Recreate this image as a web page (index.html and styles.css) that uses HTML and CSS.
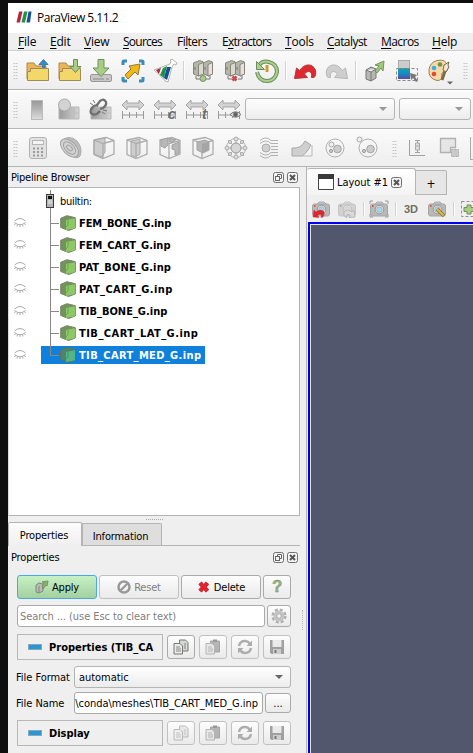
FILE: index.html
```html
<!DOCTYPE html>
<html lang="en">
<head>
<meta charset="utf-8">
<title>ParaView 5.11.2</title>
<link rel="stylesheet" href="styles.css">
</head>
<body>
<svg class="defs" width="0" height="0">
  <defs>
    <linearGradient id="gray" x1="0" y1="0" x2="0" y2="1"><stop offset="0" stop-color="#989898"/><stop offset=".45" stop-color="#b4b4b4"/><stop offset="1" stop-color="#ddd"/></linearGradient>
    <linearGradient id="grayH" x1="0" y1="0" x2="1" y2="0"><stop offset="0" stop-color="#999"/><stop offset="1" stop-color="#d5d5d5"/></linearGradient>
    <linearGradient id="rainbow" x1="0" y1="0" x2="0" y2="1"><stop offset="0" stop-color="#16a5a0"/><stop offset=".5" stop-color="#168bc9"/><stop offset="1" stop-color="#5b4a9a"/></linearGradient>
    <symbol id="folder" viewBox="0 0 24 24"><path d="M2 20V4h7l2 3h10v13z" fill="#eeb457" stroke="#a98a50"/><path d="M5.500 9.500h18v12H2.500v-9h3z" fill="#f3d768" stroke="#a08c58"/></symbol>
    <symbol id="server" viewBox="0 0 24 24"><path d="M2.500 4l6-2.500 4 1.500v12l-5 2-5-2z" fill="#b5b6aa" stroke="#85857a"/><path d="M7.500 5.500l5-2V15l-5 2z" fill="#dadad0" stroke="#85857a"/><path d="M12.500 4l5-2.500 4 1.500v12l-4 2-5-2z" fill="#b5b6aa" stroke="#85857a"/><path d="M17 5.500l4.500-2V15L17 17z" fill="#eadfe0" stroke="#85857a"/><path d="M5 17v3h4m6 0h4v-3M4 8v3m10-3v3" fill="none" stroke="#777"/></symbol>
    <symbol id="cube" viewBox="0 0 16 16"><path d="M.7 3.300L7 .7l8.300 2V13L8.500 15.500.7 12.500z" fill="#71945b" stroke="#7b806c"/><path d="M6 5L15 3.300v9.900L6 15z" fill="#8cc866"/><path d="M8 4.800v5.200l-2 2" fill="none" stroke="#6ea44f"/></symbol>
    <symbol id="eye" viewBox="0 0 12 12"><path d="M.5 4Q6-1 11.500 4M.5 5.500Q6 10 11.500 5.500M1.500 6.500L.5 8m3-.5L3 9.500m3-1.500v2m2.500-2.500l.5 2m1.500-3l1 1.500" fill="none" stroke="#aaa"/></symbol>
    <symbol id="range" viewBox="0 0 24 24"><path d="M1 7l5-5v3h12V2l5 5-5 5V9H6v3z" fill="#d2d2d2" stroke="#a6a6a6"/><path d="M1.500 13v8m21-8v8M2 17h20M8.500 14v6m7-6v6" fill="none" stroke="#999"/></symbol>
    <symbol id="wire" viewBox="0 0 24 24"><path d="M2 4l12-2.500 8 3V18L11 22.500l-9-4zM2 4l9 3.500v15M11 7.500l11-3" fill="none" stroke="#acacac" stroke-width="1.300"/></symbol>
    <symbol id="camera" viewBox="0 0 20 18"><rect x="1.500" y="4" width="17" height="12" rx="2" fill="#b9b9b7" stroke="#a5a5a3"/><path d="M6 4l2-2h5l2 2z" fill="#ccc" stroke="#aaa"/><circle cx="10.500" cy="9.500" r="4.300" fill="#e1e1df" stroke="#999"/><circle cx="10.500" cy="9.500" r="2.700" fill="#aad7f0" stroke="#90a8b5" stroke-width=".7"/><path d="M3 6h1.500" stroke="#e33" stroke-width="1.500"/></symbol>
    <symbol id="undo" viewBox="0 0 24 24"><path d="M1.500 19.500L3.500 9l3 2.500Q12 4 18.500 6.500q6 3.500 3.500 11-1 1.500-3.500 1 1-6-3-6-2.500 0-4 2.500l3 3.500z"/></symbol>
    <symbol id="restore" viewBox="0 0 11 11"><rect x=".5" y=".5" width="10" height="10" rx="2" fill="#f4f4f4" stroke="#6e6e6e"/><path d="M4.500 4.500v-2h4v4h-2" fill="none" stroke="#666"/><rect x="2.500" y="4.500" width="4" height="4" fill="none" stroke="#666"/></symbol>
    <symbol id="close" viewBox="0 0 11 11"><rect x=".5" y=".5" width="10" height="10" rx="2" fill="#f4f4f4" stroke="#6e6e6e"/><path d="M3 3l5 5m0-5L3 8" stroke="#555" stroke-width="2"/></symbol>
    <symbol id="copy" viewBox="0 0 16 16"><path d="M6.500 1h6l2.500 2.500V12H6.500z" fill="#d4d7d2" stroke="#777"/><path d="M1 4.500h6L9.500 7v8H1z" fill="#e9ebe5" stroke="#777"/><path d="M3 8h4M3 10h5M3 12h5M11 5h2m-2 2h2m-2 2h2" stroke="#888"/></symbol>
    <symbol id="paste" viewBox="0 0 16 16"><path d="M5.500 2h9v11h-9z" fill="#aaa" stroke="#999"/><path d="M8 .5h4V3H8z" fill="#888"/><path d="M1 4.500h6L9.500 7v8H1z" fill="#e6e6e6" stroke="#aaa"/><path d="M3 8h4M3 10h5M3 12h5" stroke="#aaa"/></symbol>
    <symbol id="reload" viewBox="0 0 16 16"><path d="M2 7Q3 2 8 2q3 0 5 3M14 9q-1 5-6 5-3 0-5-3" fill="none" stroke="#a1a1a1" stroke-width="2.400"/><path d="M15 1.500v5.500H9.500zM1 14.500V9h5.500z" fill="#a1a1a1"/></symbol>
    <symbol id="save" viewBox="0 0 16 16"><path d="M1 1h14v14H2.500L1 13.500z" fill="#929292"/><path d="M3.500 1h9v7h-9z" fill="#e9e9e9"/><path d="M4 10h8v5H4z" fill="#c9c9c9"/><path d="M5.500 11h2v3h-2z" fill="#666"/></symbol>
  </defs>
</svg>
<div class="window">
  <header class="titlebar">
    <svg class="logo" viewBox="0 0 16 12"><path d="M3 .5h3.500l-2.500 11H.5z" fill="#b5273a"/><path d="M8 .5h3.500L9 11.500H5.500z" fill="#219149"/><path d="M12.500.5H15.500L14 11.500h-3.500z" fill="#154f94"/></svg>
    <span>ParaView 5.11.2</span>
  </header>
  <nav class="menubar">
    <span class="m-file"><u>F</u>ile</span><span class="m-edit"><u>E</u>dit</span><span class="m-view"><u>V</u>iew</span><span class="m-sources"><u>S</u>ources</span><span class="m-filters">Fi<u>l</u>ters</span><span class="m-extractors">E<u>x</u>tractors</span><span class="m-tools"><u>T</u>ools</span><span class="m-catalyst"><u>C</u>atalyst</span><span class="m-macros"><u>M</u>acros</span><span class="m-help"><u>H</u>elp</span>
  </nav>
  <div class="toolbar">
    <i class="grip"></i>
    <svg viewBox="0 0 24 24"><use href="#folder"/><path d="M17.500 8.500V5.500H14L18.500.5 23 5.500h-3v3z" fill="#2990cc" stroke="#4b7898"/></svg>
    <svg viewBox="0 0 24 24"><use href="#folder"/><path d="M16.500.5h4v7H24l-5.500 6L13 7.500h3.500z" fill="#a7cc84" stroke="#748b61"/></svg>
    <svg viewBox="0 0 24 24"><rect x="1.500" y="15.500" width="21" height="7" rx="1.500" fill="#c8c8c6" stroke="#999"/><path d="M4 20h11m2 0h3" stroke="#888"/><path d="M9 .5h6v8.500h5l-8 8.500L4 9h5z" fill="#a7cc84" stroke="#748b61"/></svg>
    <svg viewBox="0 0 24 24"><path d="M2 6V3q0-1 1-1h3M18 2h3q1 0 1 1v3M2 18v3q0 1 1 1h3m12 0h3q1 0 1-1v-3" fill="none" stroke="#3e8bb8" stroke-width="3"/><path d="M8 7l11-2-2 11-3-3-7 7-3-4 6-6z" fill="#f2b818" stroke="#8c7c43"/></svg>
    <svg viewBox="0 0 24 24"><path d="M1 11L17 5l1-3-1-1 2-1 5 4-1 2-2-1-2 3-4 15-3-1-2-3H9l-3-4-4-3z" fill="#fff" stroke="#b4b4ac"/><path d="M3 11l5-2-2 6z" fill="#b7293b"/><path d="M10 9l4-2-3 12-4-3z" fill="#219149"/><path d="M14 8h4l-4 13-3-2z" fill="#154f94"/></svg>
    <i class="sep"></i>
    <svg viewBox="0 0 24 24"><use href="#server"/><circle cx="12" cy="19.500" r="3" fill="#a7cc84" stroke="#7b8b6c"/></svg>
    <svg viewBox="0 0 24 24"><use href="#server"/><path d="M9.500 17.500l4 4m0-4l-4 4" stroke="#ce4848" stroke-width="2.500"/></svg>
    <svg viewBox="0 0 24 24"><path d="M4 6q4-5 10-3 8 2 8 10-2 9-10 9-8 0-10-9" fill="none" stroke="#6d8961" stroke-width="4"/><path d="M4 6q4-5 10-3 8 2 8 10-2 9-10 9-8 0-10-9" fill="none" stroke="#a8d284" stroke-width="2"/><path d="M1.500 2.500v8h8z" fill="#a8d284" stroke="#6d8961"/><path d="M12 6v7" stroke="#cc9d32" stroke-width="3"/></svg>
    <i class="sep"></i>
    <svg viewBox="0 0 24 24"><use href="#undo" fill="#e2272f" stroke="#ab3b42"/></svg>
    <svg viewBox="0 0 24 24"><use href="#undo" fill="#cecece" stroke="#b6b6b6" transform="matrix(-1 0 0 1 24 0)"/></svg>
    <i class="sep"></i>
    <svg viewBox="0 0 24 24"><path d="M3 11l5-3 5 2v9l-5 3-5-2zM8 13v9M3 11l5 2 5-3" fill="#b7b8b2" stroke="#777"/><path d="M12 12l4-5-4-1 9-4-1 10-2-3-4 5z" fill="#9bcc75" stroke="#759060"/></svg>
    <svg viewBox="0 0 24 24"><rect x="3.500" y="1.500" width="11" height="8" fill="#ccc" stroke="#aaa"/><rect x="3" y="9" width="12" height="11" fill="url(#rainbow)"/><path d="M1.500 9.500h21v12h-21z" fill="none" stroke="#888" stroke-dasharray="3 2"/><path d="M15 14l7 2-2 2 3 4-2 1-3-4-2 2z" fill="#777"/></svg>
    <svg viewBox="0 0 24 24"><path d="M10 1.500q9-2 11 6 0 6-5 6-2 0-1 4 0 4-5 4-9-2-8-11 1-7 8-9z" fill="#f6d9a8" stroke="#9c8355"/><circle cx="7" cy="9" r="2.300" fill="#42afd9"/><circle cx="13" cy="5.500" r="2.300" fill="#6b9645"/><circle cx="7" cy="15" r="2.300" fill="#e14a35"/><path d="M18 12l-3 9" stroke="#7d6b45" stroke-width="3"/><path d="M17 6l5-3-1 3 1 2-3 5-3-2z" fill="#eee7d2" stroke="#756b4d"/><path d="M20 22.500h6l-3 3z" fill="#666"/></svg>
    <i class="grip last"></i>
  </div>
  <div class="toolbar color-bar">
    <i class="grip"></i>
    <svg viewBox="0 0 24 24"><rect x="6.500" y="2.500" width="11" height="19" fill="url(#gray)" stroke="#bababa"/></svg>
    <svg viewBox="0 0 24 24"><path d="M2 9h20v12H2z" fill="url(#grayH)" stroke="#b7b7b7"/><path d="M12 15h10m-5-6v12" stroke="#bbb"/><circle cx="7.500" cy="7" r="6" fill="#d3d3d3" stroke="#aaa"/></svg>
    <svg viewBox="0 0 24 24"><path d="M2 9h20v12H2z" fill="url(#grayH)" stroke="#b7b7b7"/><path d="M12 15h10m-5-6v12" stroke="#bbb"/><g fill="none" stroke="#707070" stroke-width="2.300"><path d="M8 7l3-4q4-3 6 1 1 3-3 6l-3 1M9 8Q6 6 3 10q-3 4 0 6 4 2 8-3"/></g><path d="M4 2l2 3M1 5l3 2m9 7l3 2m-2-4l4 1" stroke="#777"/></svg>
    <svg viewBox="0 0 24 24"><use href="#range"/></svg>
    <svg viewBox="0 0 24 24"><use href="#range"/><text class="icon-letter" x="15" y="21">c</text></svg>
    <svg viewBox="0 0 24 24"><use href="#range"/><text class="icon-letter" x="17" y="21">t</text></svg>
    <svg viewBox="0 0 24 24"><use href="#range"/><path d="M13 16.500q5.500-5.500 11 0-5.500 5.500-11 0z" fill="#ddd" stroke="#777"/><circle cx="18.500" cy="16.500" r="2.400" fill="#666"/></svg>
    <div class="combo array"><i class="arrow"></i></div>
    <div class="combo component"><i class="arrow"></i></div>
  </div>
  <div class="toolbar filters">
    <i class="grip"></i>
    <svg viewBox="0 0 24 24"><rect x="3.500" y="1.500" width="17" height="21" rx="2.500" fill="#e2e2e2" stroke="#b2b2b2"/><rect x="6.500" y="4.500" width="11" height="4" fill="#f4f4f4" stroke="#b5b5b5"/><path d="M7 12.500h2m2 0h2m2 0h2M7 16h2m2 0h2m2 0h2M7 19.500h2m2 0h2m2 0h2" stroke="#999" stroke-width="2"/></svg>
    <svg viewBox="0 0 24 24"><path d="M2 5Q10-2 18 5q6 7 3 15-3 4-10-1Q2 13 2 5z" fill="#bdbdbd" stroke="#aaa"/><g fill="#d2d2d2" stroke="#a4a4a4"><ellipse cx="10.500" cy="12" rx="11" ry="6.500" transform="rotate(45 10.500 12)"/><ellipse cx="10.500" cy="12" rx="7.500" ry="4.300" transform="rotate(45 10.500 12)"/><ellipse cx="10.500" cy="12" rx="3.500" ry="2" transform="rotate(45 10.500 12)"/></g></svg>
    <svg viewBox="0 0 24 24"><path d="M2 4l11-2v14l-3 5-8-3z" fill="#cdcdcd" stroke="#a8a8a8"/><use href="#wire"/></svg>
    <svg viewBox="0 0 24 24"><path d="M6 5l9-2v15l-5 3-4-2z" fill="#cdcdcd" stroke="#a8a8a8"/><use href="#wire"/></svg>
    <svg viewBox="0 0 24 24"><use href="#wire"/><path d="M3 4l7-2v7l-3 3-4-2zm11 5l7-3v11l-4 2v-5l-3-1zM11 2.500l7 1-4 3-3-1z" fill="#b8b8b8" stroke="#a0a0a0"/></svg>
    <svg viewBox="0 0 24 24"><use href="#wire"/><path d="M6 6l8-2 4 2v8l-6 3-6-3z" fill="#b4b4b4" stroke="#a5a5a5"/><path d="M11 8l7-2v8l-7 3z" fill="#a5a5a5"/></svg>
    <svg viewBox="0 0 24 24"><g fill="none" stroke="#b0b0b0"><circle cx="12" cy="12" r="9.500"/><path d="M12 1v22M1 12h22M4 4l16 16M20 4L4 20"/></g><circle cx="12" cy="12" r="5" fill="#d7d7d7" stroke="#999"/><g fill="#e0e0e0" stroke="#aaa"><circle cx="12" cy="3" r="2"/><circle cx="12" cy="21" r="2"/><circle cx="3" cy="12" r="2"/><circle cx="21" cy="12" r="2"/><circle cx="6" cy="6" r="1.500"/><circle cx="18" cy="18" r="1.500"/><circle cx="18" cy="6" r="1.500"/><circle cx="6" cy="18" r="1.500"/></g></svg>
    <svg viewBox="0 0 24 24"><circle cx="9" cy="12" r="4" fill="#d0d0d0" stroke="#aaa"/><path d="M3 7.500q6-5 11 0h7M3 4.500q6-5 11 0h7M3 16.500q6 5 11 0h7M3 19.500q6 5 11 0h7M14 10.500h7m-7 3h7" fill="none" stroke="#b0b0b0"/></svg>
    <svg viewBox="0 0 24 24"><path d="M2 12q9 1 13-7l6 4q-5 9-9 11H2z" fill="#cfcfcf" stroke="#a8a8a8"/><path d="M12 20h10V9" fill="none" stroke="#bbb"/></svg>
    <svg viewBox="0 0 24 24"><circle cx="12" cy="12" r="9" fill="none" stroke="#b0b0b0"/><circle cx="8.500" cy="8.500" r="2.500" fill="#eee" stroke="#aaa"/><circle cx="14.500" cy="13" r="3.800" fill="#ccc" stroke="#a4a4a4"/><circle cx="8" cy="15" r="1.600" fill="#ccc" stroke="#999"/></svg>
    <svg viewBox="0 0 24 24"><circle cx="12" cy="12" r="9" fill="none" stroke="#b0b0b0"/><circle cx="3.500" cy="3.500" r="2.500" fill="#eee" stroke="#aaa"/><circle cx="14.500" cy="13" r="3.800" fill="#ccc" stroke="#a4a4a4"/><circle cx="8" cy="15" r="1.600" fill="#ccc" stroke="#999"/></svg>
    <i class="grip middle"></i>
    <svg viewBox="0 0 24 24"><path d="M4.500 4v15.500H20M12.500 4v13M10 4.500h5M10 16.500h5" fill="none" stroke="#a0a0a0"/><path d="M10.500 7h4v7h-4zM10.500 10h4" fill="#ddd" stroke="#aaa"/></svg>
    <svg viewBox="0 0 24 24"><path d="M2.500 2.500h15v9h-5v5h-10z" fill="#e6e6e6" stroke="#b0b0b0" stroke-width="1.300"/><path d="M13.500 13.500h7v7h-7z" fill="#c9c9c9" stroke="#aaa" stroke-dasharray="2 1"/></svg>
    <i class="plot-edge"></i>
  </div>
  <main class="workspace">
    <aside class="docks">
      <div class="dock-title"><span class="t-pipeline">Pipeline Browser</span><span class="dock-buttons"><svg viewBox="0 0 11 11"><use href="#restore"/></svg><svg viewBox="0 0 11 11"><use href="#close"/></svg></span></div>
      <div class="tree">
        <div class="server-row"><svg class="server-icon" viewBox="0 0 8 14"><rect x=".5" y=".5" width="7" height="13" fill="#b5b5b5" stroke="#3c3c3c"/><path d="M2 2h4v3H2z" fill="#111"/><path d="M2 7h4m-4 2h4" stroke="#eee"/></svg><span>builtin:</span></div>
        <div class="node"><svg class="eye" viewBox="0 0 12 12"><use href="#eye"/></svg><div class="label"><svg viewBox="0 0 16 16"><use href="#cube"/></svg><b class="tight">FEM_BONE_G.inp</b></div></div>
        <div class="node"><svg class="eye" viewBox="0 0 12 12"><use href="#eye"/></svg><div class="label"><svg viewBox="0 0 16 16"><use href="#cube"/></svg><b>FEM_CART_G.inp</b></div></div>
        <div class="node"><svg class="eye" viewBox="0 0 12 12"><use href="#eye"/></svg><div class="label"><svg viewBox="0 0 16 16"><use href="#cube"/></svg><b class="loose">PAT_BONE_G.inp</b></div></div>
        <div class="node"><svg class="eye" viewBox="0 0 12 12"><use href="#eye"/></svg><div class="label"><svg viewBox="0 0 16 16"><use href="#cube"/></svg><b>PAT_CART_G.inp</b></div></div>
        <div class="node"><svg class="eye" viewBox="0 0 12 12"><use href="#eye"/></svg><div class="label"><svg viewBox="0 0 16 16"><use href="#cube"/></svg><b>TIB_BONE_G.inp</b></div></div>
        <div class="node"><svg class="eye" viewBox="0 0 12 12"><use href="#eye"/></svg><div class="label"><svg viewBox="0 0 16 16"><use href="#cube"/></svg><b>TIB_CART_LAT_G.inp</b></div></div>
        <div class="node selected"><svg class="eye" viewBox="0 0 12 12"><use href="#eye"/></svg><div class="label"><svg viewBox="0 0 16 16"><use href="#cube"/></svg><b>TIB_CART_MED_G.inp</b></div></div>
      </div>
      <div class="splitter"><i></i></div>
      <div class="tabs"><div class="tab active">Properties</div><div class="tab">Information</div></div>
      <div class="dock-title properties-title"><span>Properties</span><span class="dock-buttons"><svg viewBox="0 0 11 11"><use href="#restore"/></svg><svg viewBox="0 0 11 11"><use href="#close"/></svg></span></div>
      <section class="panel">
        <div class="actions">
          <button class="btn apply"><svg viewBox="0 0 14 14"><path d="M1 5l3-2 4 1v7l-4 2-3-1zM4 6v7" fill="#bbb" stroke="#7d8b77"/><path d="M7 6l2-3-2-1 6-1-1 5-1-1-3 4z" fill="#83b56c" stroke="#789367"/></svg>Apply</button>
          <button class="btn disabled"><svg viewBox="0 0 14 14"><circle cx="7" cy="7" r="5.500" fill="none" stroke="#999" stroke-width="2.500"/><path d="M3 11l8-8" stroke="#999" stroke-width="2.300"/></svg>Reset</button>
          <button class="btn"><svg viewBox="0 0 14 14"><path d="M3 3l7.500 8M10.500 3L3 11" stroke="#b03540" stroke-width="4.400"/><path d="M3 3l7.500 8M10.500 3L3 11" stroke="#e8222c" stroke-width="3.200"/></svg>Delete</button>
          <button class="btn help">?</button>
        </div>
        <div class="search-row"><div class="field search">Search ... (use Esc to clear text)</div><button class="btn"><svg viewBox="0 0 16 16"><circle cx="8" cy="8" r="6.300" fill="none" stroke="#b0b0b0" stroke-width="2.500" stroke-dasharray="3 1.950"/><circle cx="8" cy="8" r="4" fill="#e0e0e0" stroke="#c4c4c4" stroke-width="3"/><circle cx="8" cy="8" r="2.300" fill="#f5f5f5" stroke="#aaa"/></svg></button></div>
        <div class="group"><div class="group-title"><i></i><b>Properties (TIB_CA</b></div><button class="btn"><svg viewBox="0 0 16 16"><use href="#copy"/></svg></button><button class="btn disabled"><svg viewBox="0 0 16 16"><use href="#paste"/></svg></button><button class="btn disabled"><svg viewBox="0 0 16 16"><use href="#reload"/></svg></button><button class="btn disabled"><svg viewBox="0 0 16 16"><use href="#save"/></svg></button></div>
        <div class="form-row format"><label>File Format</label><div class="combo">automatic<i class="arrow"></i></div></div>
        <div class="form-row name"><label>File Name</label><div class="field">\conda\meshes\TIB_CART_MED_G.inp</div><button class="btn">...</button></div>
        <div class="group display"><div class="group-title"><i></i><b>Display</b></div><button class="btn disabled"><svg class="dim" viewBox="0 0 16 16"><use href="#copy"/></svg></button><button class="btn disabled"><svg viewBox="0 0 16 16"><use href="#paste"/></svg></button><button class="btn disabled"><svg viewBox="0 0 16 16"><use href="#reload"/></svg></button><button class="btn disabled"><svg viewBox="0 0 16 16"><use href="#save"/></svg></button></div>
      </section>
    </aside>
    <div class="vertical-splitter"><i></i></div>
    <section class="views">
      <div class="layout-tabs"><div class="layout-tab"><svg viewBox="0 0 16 16"><path d="M.5.5h15v15H.5z" fill="#fff" stroke="#444"/><path d="M0 0h16v5H0z" fill="#3a3a3a"/></svg><span>Layout #1</span><svg class="x" viewBox="0 0 11 11"><use href="#close"/></svg></div><div class="add-tab">+</div></div>
      <div class="view-toolbar">
        <svg viewBox="0 0 20 18"><use href="#camera"/><path d="M2 17l1-7 2 2q5-4 8 0 1 2-1 5l-2 .5q1-4-2-3l-1.500 1 1.500 2z" fill="#e1252d" stroke="#b93a40" stroke-width=".5"/></svg>
        <svg class="faded" viewBox="0 0 20 18"><use href="#camera"/><path d="M18 17l-1-7-2 2q-5-4-8 0-1 2 1 5l2 .5q-1-4 2-3l1.500 1-1.500 2z" fill="#ccc" stroke="#888"/></svg>
        <i class="sep"></i>
        <svg viewBox="0 0 20 18"><use href="#camera"/><path d="M1 4V1h3m12 0h3v3M1 14v3h3m12 0h3v-3" fill="none" stroke="#999"/></svg>
        <i class="sep"></i>
        <b>3D</b>
        <svg class="zoom" viewBox="0 0 20 18"><use href="#camera"/><path d="M10 9l7 7" stroke="#8c732f" stroke-width="3.600"/><path d="M10 9l6.500 6.500" stroke="#e4bb47" stroke-width="2"/></svg>
        <i class="sep"></i>
        <svg viewBox="0 0 20 18"><path d="M2.500 1.500h16v15h-16z" fill="none" stroke="#909090" stroke-dasharray="3 2"/><path d="M8 5h4v2.500h3v4h-3V14H8v-2.500H5v-4h3z" fill="#a7cc84" stroke="#748b61"/></svg>
      </div>
      <div class="viewport"></div>
    </section>
  </main>
</div>
</body>
</html>
```

FILE: styles.css
```css
* { box-sizing: border-box; }
body {
  margin: 0;
  width: 473px;
  height: 753px;
  overflow: hidden;
  padding: 3px 0 0 8px;
  background: #0e0e0e;
  color: #000;
  font-family: "DejaVu Sans Condensed", "DejaVu Sans", sans-serif;
  font-stretch: condensed;
  font-size: 11px;
  letter-spacing: -.05px;
}
.defs { position: absolute; }
svg { display: block; flex: none; overflow: visible; }
.window { width: 465px; height: 750px; background: #efefef; display: flex; flex-direction: column; overflow: hidden; }
.titlebar { height: 30px; flex: none; background: #fff; display: flex; align-items: center; gap: 5px; padding: 0 0 2px 8px; font: 12px "Open Sans", sans-serif; letter-spacing: -.5px; }
.logo { width: 16px; height: 12px; }
.menubar { height: 18px; flex: none; border-bottom: 1px solid #cdcdcd; display: flex; padding-left: 10px; font: 12px/17px "Open Sans", sans-serif; white-space: nowrap; }
.menubar span { flex: none; letter-spacing: -.55px; }
.menubar u { text-underline-offset: 2px; text-decoration-thickness: 1px; }
.menubar .m-file, .menubar .m-edit, .menubar .m-view, .menubar .m-help, .menubar .m-tools { letter-spacing: -.2px; }
.menubar .m-sources, .menubar .m-extractors { letter-spacing: -.75px; }
.m-file { width: 32px; }
.m-edit { width: 34px; }
.m-view { width: 39px; }
.m-sources { width: 54px; }
.m-filters { width: 45px; }
.m-extractors { width: 63px; }
.m-tools { width: 42px; }
.m-catalyst { width: 54px; }
.m-macros { width: 51px; }

.toolbar { height: 39px; flex: none; display: flex; align-items: center; border-bottom: 1px solid #b5b5b5; border-top: 1px solid #fff; background: linear-gradient(#fafafa, #eee); padding-left: 5px; }
.toolbar > svg { width: 24px; height: 24px; margin: 0 4px; }
.filters { height: 38px; }
.filters > svg { margin: 0 4.500px; }
.grip { flex: none; width: 5px; height: 17px; margin-right: 3px; background-image: radial-gradient(circle, #bbb 0 .7px, transparent .9px); background-size: 2.500px 3px; }
.grip.last { margin: 0 0 0 8px; }
.grip.middle { margin: 0 3px 0 8px; }
.sep { flex: none; width: 2px; height: 19px; margin: 0 2px; border-left: 1px solid #d1d1d1; border-right: 1px solid #fff; }
.icon-letter { font: italic bold 14px "Liberation Sans", sans-serif; fill: #6c6c6c; }
.plot-edge { width: 6px; height: 23px; margin-left: 4px; border: solid #aaa; border-width: 0 0 1px 1px; flex: none; }
.combo { height: 22px; border: 1px solid #b4b4b4; border-radius: 3px; background: linear-gradient(#fefefe, #ececec); display: flex; align-items: center; justify-content: space-between; padding: 0 7px 0 4px; }
.combo.array { width: 150px; flex: none; justify-content: flex-end; }
.combo.component { width: 72px; flex: none; margin-left: 4px; justify-content: flex-end; }
.arrow { border: 4px solid transparent; border-top-color: #666; border-bottom: 0; }
.color-bar .arrow { border-top-color: #999; }
.color-bar .combo { margin-top: -1px; }

.workspace { flex: 1; display: flex; min-height: 0; }
.docks { width: 292px; flex: none; display: flex; flex-direction: column; }
.dock-title { height: 20px; flex: none; display: flex; align-items: center; justify-content: space-between; padding: 0 2px 0 3px; }
.t-pipeline { letter-spacing: -.23px; }
.dock-buttons { display: flex; gap: 3px; }
.dock-buttons svg { width: 11px; height: 11px; }
.tree { height: 329px; flex: none; background: #fff; border: 1px solid #b4b4b4; border-left-color: #ddd; padding-top: 2px; }
.server-row, .node { height: 22px; display: flex; align-items: center; }
.server-row { padding-left: 37px; gap: 6px; letter-spacing: -.3px; background: linear-gradient(#888, #888) 41px 0 / 1px 22px no-repeat; }
.server-icon { width: 8px; height: 14px; }
.eye { width: 12px; height: 12px; margin: 0 15px 0 5px; }
.node .label { position: relative; height: 18px; padding: 0 4px 0 19px; display: flex; align-items: center; gap: 3px; }
.label svg { width: 16px; height: 16px; }
.label b { letter-spacing: 0; }
.label b.tight { letter-spacing: -.1px; }
.label b.loose { letter-spacing: .14px; }
.node:nth-child(5) b { letter-spacing: .42px; }
.node:nth-child(7) b { letter-spacing: .47px; }
.node:nth-child(8) b { letter-spacing: .36px; }
.label::before { content: ""; position: absolute; left: 9px; top: -2px; width: 8px; height: 11px; border: solid #888; border-width: 0 0 1px 1px; }
.label::after { content: ""; position: absolute; left: 9px; top: 9px; width: 1px; height: 11px; background: #888; }
.selected .label { background: #0f80dc; color: #fff; }
.selected .label::after { display: none; }
.selected .label svg { filter: hue-rotate(45deg) brightness(.87); }
.splitter { height: 6px; flex: none; display: flex; justify-content: center; align-items: center; }
.splitter i { width: 17px; border-top: 1px dotted #aaa; }
.tabs { height: 24px; flex: none; display: flex; align-items: flex-end; border-bottom: 1px solid #b4b4b4; }
.tab { width: 80px; height: 22px; border: 1px solid #b4b4b4; border-bottom: 0; border-radius: 0 2px 0 0; background: #dedede; display: flex; align-items: center; justify-content: center; padding: 3px 3px 0 0; letter-spacing: -.15px; }
.tab.active { width: 74px; height: 24px; margin-bottom: -1px; background: linear-gradient(#fcfcfc, #efefef); padding: 2px 2px 0 0; border-radius: 2px 2px 0 0; }
.properties-title { height: 22px; letter-spacing: -.15px; }
.panel { padding: 7px 9px 0; }
.btn { height: 24px; min-width: 0; padding: 0; margin: 0; border: 1px solid #aaa; border-radius: 3px; background: linear-gradient(#fdfdfd, #eaeaea); color: #000; font: inherit; letter-spacing: inherit; display: flex; align-items: center; justify-content: center; gap: 3px; }
.btn.disabled { border-color: #c1c1c1; color: #808080; }
.btn svg { width: 16px; height: 16px; }
.actions { display: grid; grid-template-columns: 80px 80px 80px 28px; gap: 2px; letter-spacing: -.2px; }
.actions .btn svg { width: 14px; height: 14px; }
.btn.apply { background: linear-gradient(#c6f1c4, #a3d0a0); border-color: #49a9e8; }
.btn.help { font: bold 17px "Liberation Sans", sans-serif; color: #94b881; -webkit-text-stroke: .4px #728366; }
.search-row { display: grid; grid-template-columns: 248px 24px; gap: 2px; margin-top: 6px; }
.search-row .btn { height: 22px; }
.field { height: 22px; border: 1px solid #aaa; border-radius: 3px; background: #fff; display: flex; align-items: center; padding: 0 2px; white-space: nowrap; overflow: hidden; }
.field.search { color: #808080; letter-spacing: -.06px; }
.group { display: grid; grid-template-columns: 146px repeat(4, 28px); column-gap: 4px; align-items: center; margin-top: 7px; }
.group-title { height: 26px; border: 1px solid #b7b7b7; display: flex; align-items: center; gap: 7px; padding: 1px 5px 0 10px; }
.group-title i { width: 14px; height: 6px; flex: none; background: #2997d2; border: 1px solid #87a8bc; margin-top: -2px; }
.group-title b { white-space: nowrap; letter-spacing: 0; }
.group.display { margin-top: 6px; }
.group .disabled svg { opacity: .85; }
.group .disabled svg.dim { filter: grayscale(1); opacity: .45; }
.form-row { display: grid; grid-template-columns: 57px 217px; align-items: center; margin-top: 6px; }
.form-row label { white-space: nowrap; margin-left: -1px; }
.form-row.name { grid-template-columns: 57px 189px 26px; column-gap: 0; margin-top: 4px; }
.name .field { justify-content: flex-end; padding-right: 4px; letter-spacing: -.02px; }
.name .btn { height: 20px; margin-left: 2px; width: 26px; }
.vertical-splitter { width: 6px; flex: none; padding-top: 443px; }
.vertical-splitter i { display: block; width: 3px; height: 20px; margin-left: 2px; border-left: 1px dotted #bbb; }
.views { flex: 1; min-width: 0; display: flex; flex-direction: column; border-left: 1px solid #b4b4b4; }
.layout-tabs { height: 28px; flex: none; display: flex; align-items: flex-end; }
.layout-tab { width: 109px; height: 27px; border: 1px solid #b4b4b4; border-bottom: 0; border-left: 0; border-radius: 3px 3px 0 0; background: linear-gradient(#fff, #f3f3f3); display: flex; align-items: center; padding-left: 11px; }
.layout-tab svg { width: 16px; height: 16px; }
.layout-tab span { width: 54px; margin-left: 3px; white-space: nowrap; }
.layout-tab svg.x { width: 11px; height: 11px; }
.add-tab { width: 31px; height: 25px; border: 1px solid #b4b4b4; border-left: 0; background: #e6e6e6; display: flex; align-items: center; justify-content: center; font-size: 12px; border-radius: 0 2px 0 0; padding-top: 2px; }
.view-toolbar { height: 27px; flex: none; display: flex; align-items: center; padding-left: 4px; }
.view-toolbar > svg { width: 20px; height: 18px; margin-right: 6px; }
.view-toolbar b { width: 18px; margin: 0 9px 0 3px; font: bold 11px "Liberation Sans", sans-serif; color: #707064; }
.view-toolbar .sep { height: 14px; margin: 0 4px 0 0; }
.faded { opacity: .55; filter: grayscale(1); }
.viewport { flex: 1; margin-left: 1px; border: solid #0000f0; border-width: 2px 0 0 2px; background: #52576e; box-shadow: inset 1px 1px 0 #e8e8e8; }
```
